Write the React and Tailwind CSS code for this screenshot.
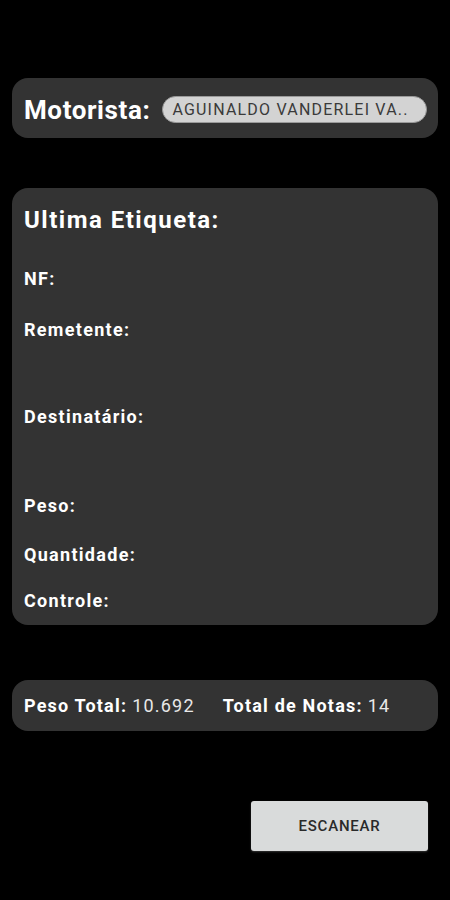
import React from "react";

const labels = [
  { text: "NF:", mt: "mt-[35px]" },
  { text: "Remetente:", mt: "mt-[31px]" },
  { text: "Destinatário:", mt: "mt-[67px]" },
  { text: "Peso:", mt: "mt-[69px]" },
  { text: "Quantidade:", mt: "mt-[29px]" },
  { text: "Controle:", mt: "mt-[26px]" },
];

function App() {
  return (
    <div
      className="min-h-[900px] w-[450px] bg-black text-white px-[12px] pt-[78px]"
      style={{ fontFamily: "Roboto, 'Liberation Sans', sans-serif" }}
    >
      <div className="h-[60px] rounded-[16px] bg-[#333333] flex items-center pl-[12px] pr-[11px] pt-[3px]">
        <span className="text-[26px] font-bold leading-none tracking-[0.6px]">Motorista:</span>
        <div className="ml-[12px] flex-1 h-[27px] rounded-full bg-[#d3d3d3] border border-[#9a9a9a] flex items-center pl-[9px] pt-[1px] text-[16px] text-[#3a3a3a] tracking-[1.2px] whitespace-nowrap overflow-hidden">
          AGUINALDO VANDERLEI VA..
        </div>
      </div>

      <div className="mt-[50px] h-[437px] rounded-[16px] bg-[#333333] px-[12px] pt-[18px]">
        <div className="text-[24px] font-bold leading-[28px] tracking-[1.5px]">Ultima Etiqueta:</div>
        {labels.map((l) => (
          <div key={l.text} className={`${l.mt} text-[18px] font-bold leading-[20px] tracking-[1.3px]`}>
            {l.text}
          </div>
        ))}
      </div>

      <div className="mt-[55px] h-[51px] rounded-[16px] bg-[#333333] flex items-center px-[12px] text-[18px] leading-none tracking-[1.2px]">
        <span className="font-bold">Peso Total:</span>
        <span className="ml-[5px] text-[#e8e8e8]">10.692</span>
        <span className="ml-[28px] font-bold">Total de Notas:</span>
        <span className="ml-[5px] text-[#e8e8e8]">14</span>
      </div>

      <div className="mt-[70px] flex justify-end pr-[10px]">
        <button className="w-[177px] h-[50px] rounded-[3px] bg-[#d9dbdb] text-[#2a2a2a] text-[15px] font-medium tracking-[0.8px] shadow-[0_1px_2px_rgba(255,255,255,0.2)]">
          ESCANEAR
        </button>
      </div>
    </div>
  );
}

export default App;
